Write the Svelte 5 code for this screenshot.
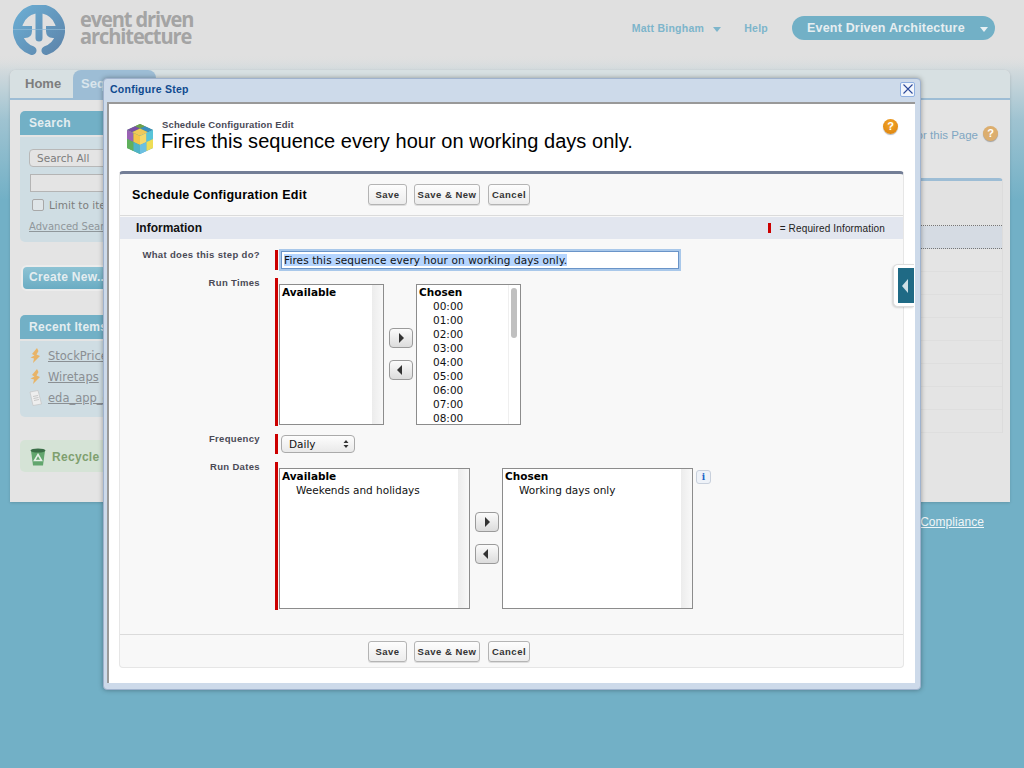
<script>
  const times = ['00:00','01:00','02:00','03:00','04:00','05:00','06:00','07:00','08:00'];
  const tableRows = [0,1,2,3,4,5,6,7];
</script>

<div class="page">
  <header class="top">
    <div class="brand">
      <svg class="logo" viewBox="0 0 52 50" width="52" height="50">
        <defs>
          <linearGradient id="lg" gradientUnits="userSpaceOnUse" x1="0" y1="0" x2="52" y2="50">
            <stop offset="0" stop-color="#6cb0d6"/><stop offset="1" stop-color="#5c82a8"/>
          </linearGradient>
        </defs>
        <path d="M19 45.500 A21.500 21.500 0 1 1 33 45.500" fill="none" stroke="url(#lg)" stroke-width="9" stroke-linecap="round"/>
        <path d="M5 21H19V26Q19 33 12 33H6Z" fill="url(#lg)"/>
        <path d="M47 21H33V26Q33 33 40 33H46Z" fill="url(#lg)"/>
        <path d="M26 5V33" stroke="url(#lg)" stroke-width="7" stroke-linecap="round"/>
        <path d="M0 24.500H52" stroke="#8fbbd8" stroke-width="1" opacity=".7"/>
      </svg>
      <div class="wordmark">event driven<br>architecture</div>
    </div>
    <nav class="topnav">
      <span class="toplink">Matt Bingham <i class="caret blue"></i></span>
      <span class="toplink help">Help</span>
      <span class="app-pill">Event Driven Architecture <i class="caret white"></i></span>
    </nav>
  </header>

  <div class="card">
    <div class="tabs">
      <span class="tab">Home</span>
      <span class="tab active">Sequences</span>
    </div>
    <div class="card-body">
      <aside class="side">
        <div class="side-head">Search</div>
        <div class="side-box search-box">
          <div class="fake-select">Search All</div>
          <div class="fake-input"></div>
          <label class="limit"><span class="check"></span>Limit to items I own</label>
          <span class="adv">Advanced Search...</span>
        </div>
        <div class="create">Create New...</div>
        <div class="side-head recent-head">Recent Items</div>
        <div class="side-box recent-box">
          <div class="recent"><svg width="11" height="15" viewBox="0 0 11 15"><path d="M7 0L2 6L4.500 7.500L0.500 9.500L4 10.500L3 15L10 8L6.500 6.500L8.500 3Z" fill="#e8b468"/></svg><span>StockPrice</span></div>
          <div class="recent"><svg width="11" height="15" viewBox="0 0 11 15"><path d="M7 0L2 6L4.500 7.500L0.500 9.500L4 10.500L3 15L10 8L6.500 6.500L8.500 3Z" fill="#e8b468"/></svg><span>Wiretaps</span></div>
          <div class="recent"><svg width="13" height="16" viewBox="0 0 13 16"><path d="M1 2L9 .5L12.500 14L4 15.500Z" fill="#eee" stroke="#c4c4c4" stroke-width=".7"/><path d="M4 6.500L9 5.500M4.500 8.500L9.500 7.500M5 10.500L10 9.500" stroke="#b5b5b5" stroke-width=".7"/></svg><span>eda_app_context</span></div>
        </div>
        <div class="recycle">
          <svg width="16" height="18" viewBox="0 0 16 18"><path d="M1 2.500H15L13 17.500H3Z" fill="#62a66e"/><ellipse cx="8" cy="2.500" rx="7.500" ry="2" fill="#3a6e47"/><path d="M8 6.500L11.500 12.500H4.500Z" fill="none" stroke="#e4efe6" stroke-width="1.600"/></svg>
          <span>Recycle Bin</span>
        </div>
      </aside>
      <main class="main">
        <div class="page-help"><span>Help for this Page</span><b class="help-dot faded">?</b></div>
        <div class="table">
          <div class="thead"></div>
          <div class="tsel"></div>
          {#each tableRows as r (r)}<div class="trow"></div>{/each}
        </div>
      </main>
    </div>
  </div>
  <footer class="foot"><span>Compliance</span></footer>

  <section class="modal">
    <div class="modal-title">
      <span>Configure Step</span>
      <button class="close" aria-label="Close">
        <svg width="10" height="10" viewBox="0 0 10 10"><path d="M.5 .5L9.500 9.500M9.500 .5L.5 9.500" stroke="#2c4a9a" stroke-width="1.100"/></svg>
      </button>
    </div>
    <div class="modal-body">
      <div class="page-title">
        <svg class="cube" width="28" height="32" viewBox="0 0 28 32">
          <path d="M14 1L27 7L14 13L1 7Z" fill="#4f9a62"/>
          <path d="M9 3.300L14 1L19 3.300L14 5.600Z" fill="#6fa04a"/>
          <path d="M19 3.300L27 7L22 9.300L14 5.600Z" fill="#3d8fbe"/>
          <path d="M1 7L9 3.300L14 5.600L6 9.300Z" fill="#7a4fa5"/>
          <path d="M6 9.300L14 5.600L22 9.300L14 13Z" fill="#f0c95a"/>
          <path d="M1 7L14 13V31L1 25Z" fill="#5ba868"/>
          <path d="M1 7L7.500 10V19L1 16Z" fill="#9a62b4"/>
          <path d="M7.500 10L14 13V22L7.500 19Z" fill="#f5c54a"/>
          <path d="M1 16L7.500 19V28L1 25Z" fill="#5fb05c"/>
          <path d="M7.500 19L14 22V31L7.500 28Z" fill="#4fb4c8"/>
          <path d="M14 13L27 7V25L14 31Z" fill="#49a9d4"/>
          <path d="M14 13L20.500 10V19L14 22Z" fill="#f6d96a"/>
          <path d="M20.500 10L27 7V16L20.500 19Z" fill="#58c4d8"/>
          <path d="M14 22L20.500 19V28L14 31Z" fill="#6cc0e0"/>
          <path d="M20.500 19L27 16V25L20.500 28Z" fill="#eedd55"/>
        </svg>
        <div class="titles">
          <div class="crumb">Schedule Configuration Edit</div>
          <h1>Fires this sequence every hour on working days only.</h1>
        </div>
        <b class="help-dot">?</b>
      </div>

      <div class="panel">
        <div class="panel-head">
          <h2>Schedule Configuration Edit</h2>
          <div class="btns"><button class="btn">Save</button><button class="btn">Save &amp; New</button><button class="btn">Cancel</button></div>
        </div>
        <div class="section">
          <h3>Information</h3>
          <span class="req"><i></i>= Required Information</span>
        </div>

        <div class="form">
          <div class="lab">What does this step do?</div>
          <div class="ctl c1">
            <div class="text-input"><span class="sel">Fires this sequence every hour on working days only.</span></div>
          </div>

          <div class="lab">Run Times</div>
          <div class="ctl c2">
            <div class="duel small">
              <div class="list"><b>Available</b><div class="sb"></div></div>
              <div class="moves">
                <button class="mv" aria-label="Add"><i class="tri right"></i></button>
                <button class="mv" aria-label="Remove"><i class="tri left"></i></button>
              </div>
              <div class="list"><b>Chosen</b>
                {#each times as t (t)}<div class="opt">{t}</div>{/each}
                <div class="sb plain"><i class="thumb"></i></div>
              </div>
            </div>
          </div>

          <div class="lab">Frequency</div>
          <div class="ctl c3">
            <div class="select">Daily<svg width="6" height="10" viewBox="0 0 6 10"><path d="M3 1L5.500 4H.5ZM3 9L.5 6H5.500Z" fill="#333"/></svg></div>
          </div>

          <div class="lab">Run Dates</div>
          <div class="ctl c4">
            <div class="duel big">
              <div class="list"><b>Available</b><div class="opt">Weekends and holidays</div><div class="sb"></div></div>
              <div class="moves">
                <button class="mv" aria-label="Add"><i class="tri right"></i></button>
                <button class="mv" aria-label="Remove"><i class="tri left"></i></button>
              </div>
              <div class="list"><b>Chosen</b><div class="opt">Working days only</div><div class="sb"></div></div>
              <button class="info">i</button>
            </div>
          </div>
        </div>

        <div class="panel-foot">
          <div class="btns"><button class="btn">Save</button><button class="btn">Save &amp; New</button><button class="btn">Cancel</button></div>
        </div>
      </div>
    </div>
    <div class="handle"><div class="handle-in"><i></i></div></div>
  </section>
</div>

<style>
  :global(body) { margin: 0; }
  .page {
    position: relative; width: 1024px; height: 768px; overflow: hidden;
    font-family: "Liberation Sans", Arial, sans-serif;
    background: linear-gradient(#e0e0e0 0, #e0e0e0 56px, #9fc3d1 120px, #72b0c6 200px, #72b0c6 100%);
  }
  .top { height: 70px; display: flex; justify-content: space-between; box-sizing: border-box; padding: 5px 29px 0 13px; background: linear-gradient(#e0e0e0 50px, rgba(224,224,224,0)); }
  .brand { display: flex; gap: 15px; }
  .logo { display: block; }
  .wordmark { font-family: "Open Sans", sans-serif; font-weight: 700; font-size: 22px; line-height: 17px; color: #a4a4a4; letter-spacing: -1.2px; padding-top: 5px; transform: scaleX(.91); transform-origin: 0 0; white-space: nowrap; }
  .topnav { display: flex; align-items: flex-start; padding-top: 11px; }
  .toplink { font-size: 10.500px; font-weight: 700; color: #7db5cb; line-height: 24px; letter-spacing: .25px; }
  .help { margin-left: 23px; margin-right: 24px; }
  .caret { display: inline-block; width: 0; height: 0; border-left: 4px solid transparent; border-right: 4px solid transparent; border-top: 5px solid; margin-left: 6px; vertical-align: 0; }
  .caret.blue { color: #7db5cb; }
  .caret.white { color: #e8f0f3; margin-left: 12px; }
  .app-pill { width: 203px; box-sizing: border-box; height: 24px; border-radius: 12px; background: #72b0c6; color: #e6eef1; font-size: 12.500px; font-weight: 700; line-height: 24px; padding-left: 15px; letter-spacing: .19px; white-space: nowrap; }

  .card { margin: 0 14px 0 10px; height: 432px; background: #e4e4e4; border-radius: 6px 6px 0 0; box-shadow: 0 1px 3px rgba(0,0,0,.15); }
  .tabs { height: 28px; display: flex; align-items: flex-end; background: #d7e0e2; border-bottom: 2px solid #9dbdd5; border-radius: 6px 6px 0 0; }
  .tab { height: 28px; line-height: 28px; font-size: 13px; font-weight: 700; color: #7d7d7d; padding: 0 12px 0 15px; box-sizing: border-box; width: 63px; }
  .tab.active { width: 83px; padding: 0 0 0 8px; color: #d9e5ec; background: #9dbdd5; border-radius: 8px 8px 0 0; }
  .card-body { display: flex; padding: 11px 7px 0 10px; }
  .side { width: 220px; flex: none; }
  .side-head { height: 24px; line-height: 24px; background: #72b0c6; border-radius: 5px 5px 0 0; color: #e4edf0; font-weight: 700; font-size: 12px; padding-left: 9px; letter-spacing: .3px; }
  .side-box { margin-top: 2px; background: #cfdde3; border-radius: 0 0 5px 5px; box-sizing: border-box; }
  .search-box { height: 105px; padding: 12px 9px; }
  .fake-select { width: 150px; box-sizing: border-box; height: 18px; border: 1px solid #b8b8b8; border-radius: 4px; background: #e4e4e4; font-family: "DejaVu Sans", sans-serif; font-size: 10.500px; line-height: 16px; padding-left: 7px; color: #7d7d7d; }
  .fake-input { width: 150px; box-sizing: border-box; height: 18px; margin: 7px 0 0 1px; border: 1px solid #b4b4b4; background: #e4e4e4; }
  .limit { display: flex; align-items: center; gap: 5px; font-family: "DejaVu Sans", sans-serif; font-size: 10.500px; color: #7d7d7d; margin: 5px 0 0 3px; line-height: 16px; }
  .check { width: 10px; height: 10px; border: 1px solid #a8a8a8; border-radius: 2px; background: #dfe5e8; }
  .adv { display: block; font-family: "DejaVu Sans", sans-serif; font-size: 10px; color: #8f979b; text-decoration: underline; margin-top: 8px; }
  .create { margin: 23px 0 0 1px; height: 22px; line-height: 21px; border: 2px solid #ececec; border-radius: 6px; background: linear-gradient(#8ec3d4, #6aacc3); color: #e4edf0; font-weight: 700; font-size: 12px; padding-left: 6px; width: 190px; letter-spacing: .3px; }
  .recent-head { margin-top: 24px; }
  .recent-box { height: 76px; padding: 4px 8px; }
  .recent { display: flex; align-items: center; height: 21px; gap: 6px; font-family: "DejaVu Sans", sans-serif; font-size: 11.500px; color: #8a8f93; padding-left: 1px; }
  .recent svg { flex: none; width: 13px; }
  .recent span { text-decoration: underline; }
  .recycle { margin-top: 23px; height: 32px; box-sizing: border-box; padding: 2px 0 0 10px; background: #d5e3d6; border-radius: 5px; display: flex; align-items: center; gap: 6px; font-size: 12px; font-weight: 700; color: #7f9f6f; letter-spacing: .3px; }
  .main { flex: 1; position: relative; }
  .page-help { height: 67px; display: flex; justify-content: flex-end; align-items: flex-start; gap: 5px; padding: 15px 5px 0 0; box-sizing: border-box; font-size: 11.500px; color: #7fa6c2; white-space: nowrap; }
  .page-help span { margin-top: 3px; }
  .table { border-top: 3px solid #9dbdd5; border-radius: 4px 4px 0 0; border-left: 1px solid #dcdcdc; border-right: 1px solid #dcdcdc; }
  .thead { height: 44px; background: #e2e2e2; border-bottom: 1px dotted #777; }
  .tsel { height: 22px; background: #d5dbe3; border-bottom: 1px dotted #777; }
  .trow { height: 22px; border-bottom: 1px solid #dedede; }
  .foot { position: absolute; top: 515px; right: 40px; color: #f0f6f8; font-size: 12px; letter-spacing: .05px; text-decoration: underline; }

  .help-dot { display: inline-block; width: 15px; height: 15px; border-radius: 50%; background: radial-gradient(circle at 50% 35%, #f4a72c, #d97e08); color: #fff; font: 700 11px/15px "Liberation Sans", sans-serif; text-align: center; flex: none; box-shadow: 0 1px 1px rgba(0,0,0,.3); }
  .help-dot.faded { background: #dcae6e; }

  .modal { position: absolute; left: 103px; top: 78px; width: 818px; height: 612px; box-sizing: border-box; border: 1px solid #9fb2cd; border-radius: 4px; background: #cddaea; box-shadow: 0 0 5px rgba(0,0,0,.35); display: flex; flex-direction: column; padding: 0 5px 0 3px; }
  .modal-title { height: 23px; flex: none; display: flex; align-items: center; justify-content: space-between; color: #0f4a8f; font-weight: 700; font-size: 10.500px; padding: 0 0 3px 3px; box-sizing: border-box; letter-spacing: .25px; }
  .close { width: 15px; height: 15px; padding: 0; box-sizing: border-box; display: grid; place-items: center; background: #f2f6fc; border: 1px solid #8fb0e0; border-radius: 2px; }
  .modal-body { border-top: 2px solid #999; border-left: 2px solid #999; background: #fff; flex: 1; box-sizing: border-box; margin-bottom: 6px; padding: 0 11px 0 10px; }
  .page-title { height: 67px; box-sizing: border-box; padding: 15px 6px 0 7px; display: flex; }
  .cube { flex: none; margin: 4px 8px 0 0; }
  .titles { flex: 1; }
  .crumb { font-size: 9.500px; font-weight: 700; color: #4a4a56; line-height: 11px; letter-spacing: .15px; }
  h1 { font-size: 20px; font-weight: 400; margin: 0 0 0 -1px; line-height: 22px; color: #000; letter-spacing: .04px; white-space: nowrap; }

  .panel { height: 497px; box-sizing: border-box; border: 1px solid #e6e6e6; border-top: 3px solid #737e96; border-radius: 4px; background: #f8f8f8; display: flex; flex-direction: column; }
  .panel-head { height: 41px; flex: none; border-bottom: 1px solid #dbdbdb; display: flex; align-items: center; }
  h2 { margin: 0; width: 248px; flex: none; box-sizing: border-box; padding-left: 12px; font-size: 12.500px; color: #000; font-weight: 700; letter-spacing: .25px; white-space: nowrap; }
  .btns { display: flex; gap: 7px; }
  .btn { height: 21px; padding: 0; font: 700 9.500px "Liberation Sans", sans-serif; letter-spacing: .5px; color: #333; background: linear-gradient(#fdfdfd, #ececec); border: 1px solid #b4b4b4; border-radius: 3px; box-shadow: 0 1px 0 #ddd; }
  .btn:nth-child(1) { width: 39px; }
  .btn:nth-child(2) { width: 66px; }
  .btn:nth-child(3) { width: 42px; margin-left: 1px; }
  .section { margin-top: 1px; height: 22px; flex: none; background: #e2e6ef; display: flex; align-items: center; justify-content: space-between; padding: 0 18px 0 16px; }
  h3 { margin: 0; font-size: 12px; font-weight: 700; color: #111; }
  .req { font-size: 10px; color: #222; display: flex; align-items: center; letter-spacing: .15px; }
  .req i { width: 3px; height: 10px; background: #c00; margin-right: 9px; }
  .form { display: grid; grid-template-columns: 140px 1fr; column-gap: 15px; row-gap: 8px; padding: 11px 0 0 0; flex: 1; align-content: start; }
  .lab { font-size: 9.500px; font-weight: 700; color: #4a4a56; text-align: right; letter-spacing: .34px; line-height: 11px; margin-top: -1px; white-space: nowrap; }
  .ctl { border-left: 3px solid #c00; box-sizing: border-box; }
  .c1 { height: 20px; padding: 1px 0 0 3px; }
  .text-input { width: 398px; height: 18px; box-sizing: border-box; background: #fff; border: 1px solid #6a94c8; box-shadow: 0 0 0 2px #a9c8ea; padding-left: 2px; font: 10.500px/16px "DejaVu Sans", sans-serif; letter-spacing: .1px; color: #111; white-space: nowrap; }
  .sel { background: #b5d5ff; }
  .c2 { height: 148px; padding: 6px 0 0 1px; }
  .c3 { height: 20px; padding: 1px 0 0 3px; }
  .c4 { height: 148px; padding: 6px 0 0 1px; }
  .select { width: 74px; height: 18px; box-sizing: border-box; display: flex; align-items: center; justify-content: space-between; padding: 0 5px 0 7px; border: 1px solid #aaa; border-radius: 4px; background: linear-gradient(#fdfdfd, #e9e9e9); font: 10.500px "DejaVu Sans", sans-serif; color: #111; }
  .duel { display: flex; height: 141px; position: relative; }
  .duel.small .list { width: 105px; }
  .duel.big .list { width: 191px; }
  .list { height: 141px; box-sizing: border-box; border: 1px solid #8c8c8c; background: #fff; position: relative; overflow: hidden; padding: 0 0 0 2px; font: 10.500px/14px "DejaVu Sans", sans-serif; color: #111; }
  .list b { display: block; color: #000; }
  .opt { padding-left: 14px; white-space: nowrap; }
  .sb { position: absolute; top: 0; right: 0; bottom: 0; width: 11px; background: linear-gradient(90deg, #ececec, #f8f8f8); }
  .sb.plain { background: #fff; border-left: 1px solid #efefef; }
  .thumb { position: absolute; top: 3px; left: 2px; width: 6px; height: 50px; border-radius: 3px; background: #c0c0c0; }
  .moves { width: 32px; flex: none; display: flex; flex-direction: column; align-items: center; gap: 12px; padding: 44px 0 0 1px; box-sizing: border-box; }
  .mv { width: 24px; height: 20px; flex: none; padding: 0; display: grid; place-items: center; border: 1px solid #9a9a9a; border-radius: 4px; background: linear-gradient(#fbfbfb, #dcdcdc); }
  .tri { width: 0; height: 0; border-top: 5px solid transparent; border-bottom: 5px solid transparent; display: block; }
  .tri.right { border-left: 5px solid #333; margin-left: 2px; }
  .tri.left { border-right: 5px solid #333; margin-right: 2px; }
  .info { position: absolute; left: 417px; top: 2px; width: 15px; height: 14px; padding: 0; border: 1px solid #c8d0dc; border-radius: 3px; background: #eef2f8; color: #1a63c8; font: 700 9px/12px "DejaVu Serif", serif; }
  .panel-foot { height: 33px; flex: none; border-top: 1px solid #dbdbdb; padding: 6px 0 0 248px; box-sizing: border-box; }

  .handle { position: absolute; left: 789px; top: 185px; width: 21px; height: 43px; box-sizing: border-box; background: #fff; border: 1px solid #ddd; border-right: none; border-radius: 5px 0 0 5px; padding: 3px 0 0 4px; box-shadow: -1px 1px 2px rgba(0,0,0,.15); }
  .handle-in { width: 16px; height: 35px; background: #1f6a85; display: grid; place-items: center; }
  .handle-in i { width: 0; height: 0; margin-right: 2px; border-top: 7px solid transparent; border-bottom: 7px solid transparent; border-right: 6px solid #cfe0e6; }
</style>
